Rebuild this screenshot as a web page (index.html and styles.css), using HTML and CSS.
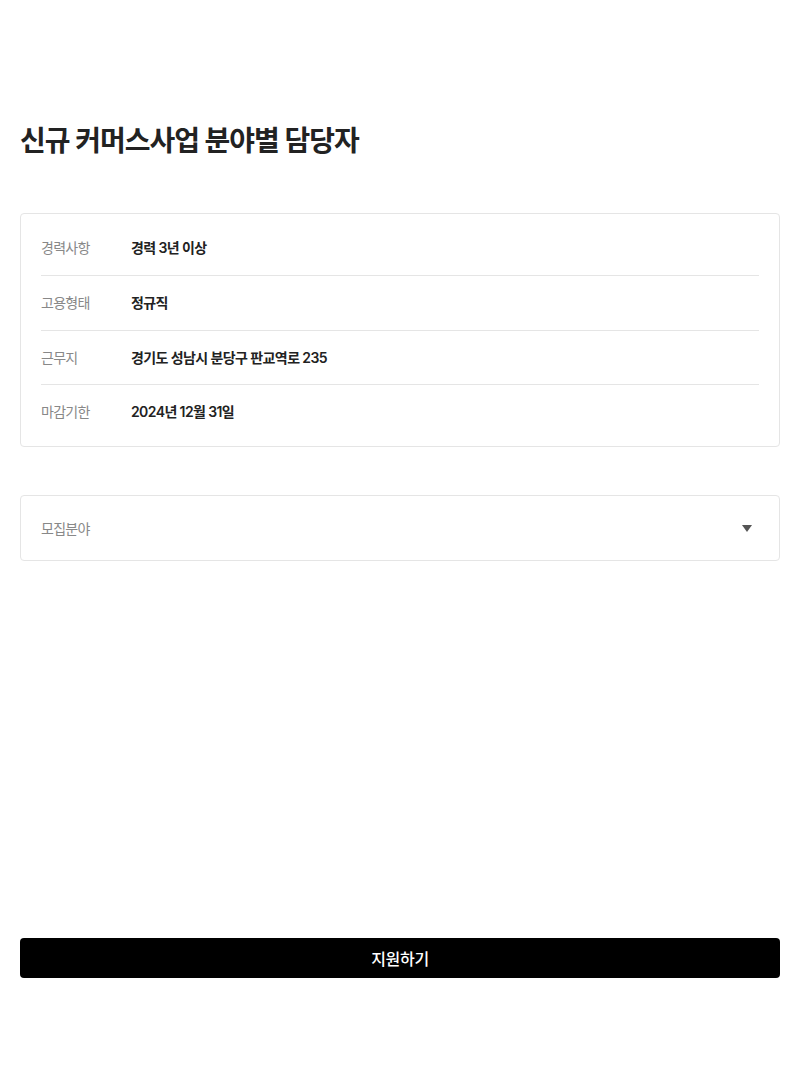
FILE: index.html
```html
<!DOCTYPE html>
<html lang="ko">
<head>
<meta charset="utf-8">
<title>신규 커머스사업 분야별 담당자</title>
<link rel="stylesheet" href="styles.css">
</head>
<body>
<div class="page">
  <h1 class="title">신규 커머스사업 분야별 담당자</h1>
  <div class="info-card">
    <div class="info-row"><span class="info-label">경력사항</span><span class="info-value">경력 3년 이상</span></div>
    <div class="info-row"><span class="info-label">고용형태</span><span class="info-value">정규직</span></div>
    <div class="info-row"><span class="info-label">근무지</span><span class="info-value">경기도 성남시 분당구 판교역로 235</span></div>
    <div class="info-row"><span class="info-label">마감기한</span><span class="info-value">2024년 12월 31일</span></div>
  </div>
  <div class="select-box">
    <span class="select-label">모집분야</span>
    <svg class="select-arrow" width="10" height="7" viewBox="0 0 10 7"><path d="M0 0H10L5 7Z" fill="#555"/></svg>
  </div>
  <button class="apply-btn" type="button">지원하기</button>
</div>
</body>
</html>
```

FILE: styles.css
```css
* { box-sizing: border-box; }
html, body { margin: 0; padding: 0; background: #fff; }
body {
  font-family: Inter, "Noto Sans CJK KR", "Noto Sans", sans-serif;
  color: #222;
}
.page {
  min-height: 1072px;
  display: flex;
  flex-direction: column;
  padding: 122px 20px 94px;
}
.title {
  margin: 0 0 52px;
  font-size: 28px;
  line-height: 39px;
  font-weight: 700;
  color: #222;
  letter-spacing: -1px;
}
.info-card {
  border: 1px solid #e5e5e5;
  border-radius: 4px;
  padding: 7px 20px 7px;
}
.info-row {
  display: flex;
  align-items: center;
  padding: 16px 0;
  line-height: 22px;
  font-size: 14px;
  border-bottom: 1px solid #e5e5e5;
}
.info-row:nth-child(3) { padding-bottom: 15px; }
.info-row:last-child { border-bottom: none; }
.info-label {
  width: 90px;
  flex-shrink: 0;
  color: #888;
  letter-spacing: -0.7px;
}
.info-value {
  font-weight: 600;
  color: #222;
  letter-spacing: -0.6px;
}
.select-box {
  margin-top: 48px;
  height: 66px;
  border: 1px solid #e5e5e5;
  border-radius: 4px;
  padding: 0 27px 0 20px;
  display: flex;
  align-items: center;
  justify-content: space-between;
}
.select-label {
  font-size: 14px;
  color: #888;
  letter-spacing: -0.7px;
}
.select-arrow { display: block; }
.apply-btn {
  margin-top: auto;
  height: 40px;
  width: 100%;
  border: none;
  border-radius: 4px;
  background: #000;
  color: #fff;
  font-family: inherit;
  font-size: 16px;
  font-weight: 500;
  letter-spacing: -0.3px;
  cursor: pointer;
}
```
